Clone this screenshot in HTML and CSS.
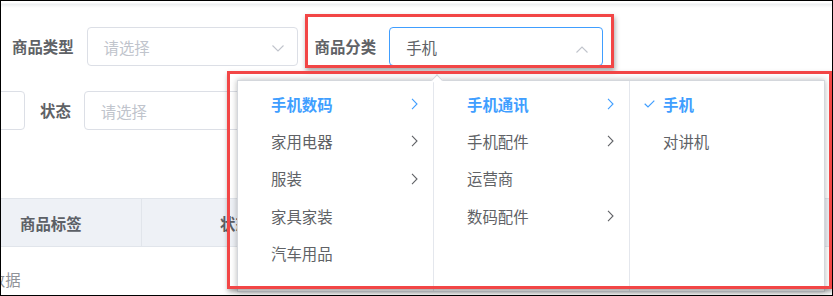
FILE: index.html
```html
<!DOCTYPE html>
<html lang="zh-CN">
  <head>
    <meta charset="UTF-8" />
    <title>商品列表</title>
    <link rel="stylesheet" href="styles.css">
  </head>
  <body>
    <div class="frame">
      <div class="topbar"></div>

      <form class="filter">
        <div class="filter-row">
          <div class="field">
            <label class="field-label">商品类型</label>
            <div class="select select-type">
              <span class="placeholder">请选择</span>
              <svg class="caret" width="12" height="7" viewBox="0 0 12 7"><path d="M0.5 0.5 L6 6 L11.5 0.5" fill="none" stroke="#c0c4cc" stroke-width="1.1"/></svg>
            </div>
          </div>
          <div class="field">
            <label class="field-label">商品分类</label>
            <div class="select select-cat is-focus">
              <span class="value">手机</span>
              <svg class="caret caret-up" width="12" height="7" viewBox="0 0 12 7"><path d="M0.5 6.5 L6 1 L11.5 6.5" fill="none" stroke="#c0c4cc" stroke-width="1.1"/></svg>
            </div>
          </div>
        </div>

        <div class="filter-row">
          <div class="select select-cut"></div>
          <div class="field">
            <label class="field-label">状态</label>
            <div class="select select-status">
              <span class="placeholder">请选择</span>
            </div>
          </div>
        </div>
      </form>

      <div class="table">
        <div class="table-head">
          <div class="th th-tag">商品标签</div>
          <div class="th th-status">状态</div>
        </div>
        <div class="table-empty">暂无数据</div>
      </div>

      <!-- cascader dropdown -->
      <div class="cascader-panel">
        <span class="popper-arrow"></span>
        <ul class="cascader-menu">
          <li class="node is-active">手机数码<svg class="node-arrow" width="7" height="12" viewBox="0 0 7 12"><path d="M1 0.8 L6 6 L1 11.2" fill="none" stroke="currentColor" stroke-width="1.1"/></svg></li>
          <li class="node">家用电器<svg class="node-arrow" width="7" height="12" viewBox="0 0 7 12"><path d="M1 0.8 L6 6 L1 11.2" fill="none" stroke="currentColor" stroke-width="1.1"/></svg></li>
          <li class="node">服装<svg class="node-arrow" width="7" height="12" viewBox="0 0 7 12"><path d="M1 0.8 L6 6 L1 11.2" fill="none" stroke="currentColor" stroke-width="1.1"/></svg></li>
          <li class="node">家具家装</li>
          <li class="node">汽车用品</li>
        </ul>
        <ul class="cascader-menu">
          <li class="node is-active">手机通讯<svg class="node-arrow" width="7" height="12" viewBox="0 0 7 12"><path d="M1 0.8 L6 6 L1 11.2" fill="none" stroke="currentColor" stroke-width="1.1"/></svg></li>
          <li class="node">手机配件<svg class="node-arrow" width="7" height="12" viewBox="0 0 7 12"><path d="M1 0.8 L6 6 L1 11.2" fill="none" stroke="currentColor" stroke-width="1.1"/></svg></li>
          <li class="node">运营商</li>
          <li class="node">数码配件<svg class="node-arrow" width="7" height="12" viewBox="0 0 7 12"><path d="M1 0.8 L6 6 L1 11.2" fill="none" stroke="currentColor" stroke-width="1.1"/></svg></li>
        </ul>
        <ul class="cascader-menu">
          <li class="node is-active"><svg class="node-check" width="11" height="8" viewBox="0 0 11 8"><path d="M0.7 3.8 L4 7 L10.3 0.7" fill="none" stroke="currentColor" stroke-width="1.2"/></svg>手机</li>
          <li class="node">对讲机</li>
        </ul>
      </div>

      <!-- annotation boxes -->
      <div class="mark mark-select"></div>
      <div class="mark mark-panel"></div>
    </div>
  </body>
</html>
```

FILE: styles.css
```css
* {
  margin: 0;
  padding: 0;
  box-sizing: border-box;
}

body {
  background: #ffffff;
  font-family: "Noto Sans CJK SC", "Noto Sans", sans-serif;
  font-size: 15.4px;
  color: #606266;
}

.frame {
  position: relative;
  width: 833px;
  height: 296px;
  border: 1px solid #000000;
  overflow: hidden;
  background: #ffffff;
}

.topbar {
  height: 7px;
  background: linear-gradient(to bottom, #ffffff 0, #ffffff 2px, #eceef0 3px, #f6f7f8 5px, #ffffff 7px);
}

/* Filter form */
.filter {
  padding: 19px 11px 0;
  display: flex;
  flex-direction: column;
  gap: 25px;
}

.filter-row {
  display: flex;
  align-items: center;
  gap: 17px;
}

.field {
  display: flex;
  align-items: center;
}

.field-label {
  padding-right: 13px;
  font-weight: 700;
  color: #5f6266;
  line-height: 39px;
}

.select {
  position: relative;
  height: 39px;
  width: 211px;
  border: 1px solid #dcdfe6;
  border-radius: 4px;
  display: flex;
  align-items: center;
  padding-left: 16px;
  background: #ffffff;
}

.select-cat {
  width: 214px;
}

.select.is-focus {
  border-color: #409eff;
}

.select-cut {
  margin-left: -198px;
  margin-right: -2px;
}

.placeholder {
  color: #c0c4cc;
}

.value {
  color: #606266;
}

.caret {
  position: absolute;
  right: 13px;
  top: 17px;
}

.caret-up {
  right: 14px;
  top: 18px;
}

/* Table */
.table {
  margin-top: 68px;
}

.table-head {
  display: flex;
  height: 49px;
  background: #eef1f6;
  border-top: 1px solid #e1e5eb;
  border-bottom: 1px solid #e1e5eb;
}

.th {
  display: flex;
  align-items: center;
  font-weight: 700;
  color: #5c6066;
}

.th-tag {
  width: 141px;
  padding-left: 19px;
  border-right: 1px solid #e1e5eb;
}

.th-status {
  flex: 1;
  padding-left: 78px;
}

.table-empty {
  margin-left: -42px;
  padding-top: 8px;
  line-height: 48px;
  color: #909399;
}

/* Cascader dropdown */
.cascader-panel {
  position: absolute;
  left: 236px;
  top: 79px;
  width: 588px;
  height: 212px;
  display: flex;
  background: #ffffff;
  border: 1px solid #d4d7dc;
  box-shadow: 0 0 6px rgba(0, 0, 0, 0.28);
}

.popper-arrow {
  position: absolute;
  left: 195px;
  top: -5px;
  width: 8px;
  height: 8px;
  background: #ffffff;
  border-left: 1px solid #d4d7dc;
  border-top: 1px solid #d4d7dc;
  transform: rotate(45deg);
}

.cascader-menu {
  list-style: none;
  width: 196px;
  padding: 4px 0;
  border-right: 1px solid #e4e7ed;
}

.cascader-menu:last-child {
  flex: 1;
  border-right: none;
}

.node {
  position: relative;
  display: flex;
  align-items: center;
  height: 37.4px;
  padding-left: 33px;
  color: #606266;
}

.node.is-active {
  color: #409eff;
  font-weight: 700;
}

.node-arrow {
  position: absolute;
  right: 15px;
  top: 13px;
  color: #606266;
}

.node.is-active .node-arrow {
  color: #409eff;
}

.node-check {
  position: absolute;
  left: 14px;
  top: 15px;
}

/* Annotation boxes */
.mark {
  position: absolute;
  border: 3px solid #f24646;
  box-shadow: 1px 3px 5px rgba(0, 0, 0, 0.35);
}

.mark-select {
  left: 304px;
  top: 13px;
  width: 309px;
  height: 54px;
}

.mark-panel {
  left: 226px;
  top: 70px;
  width: 605px;
  height: 218px;
}
```
